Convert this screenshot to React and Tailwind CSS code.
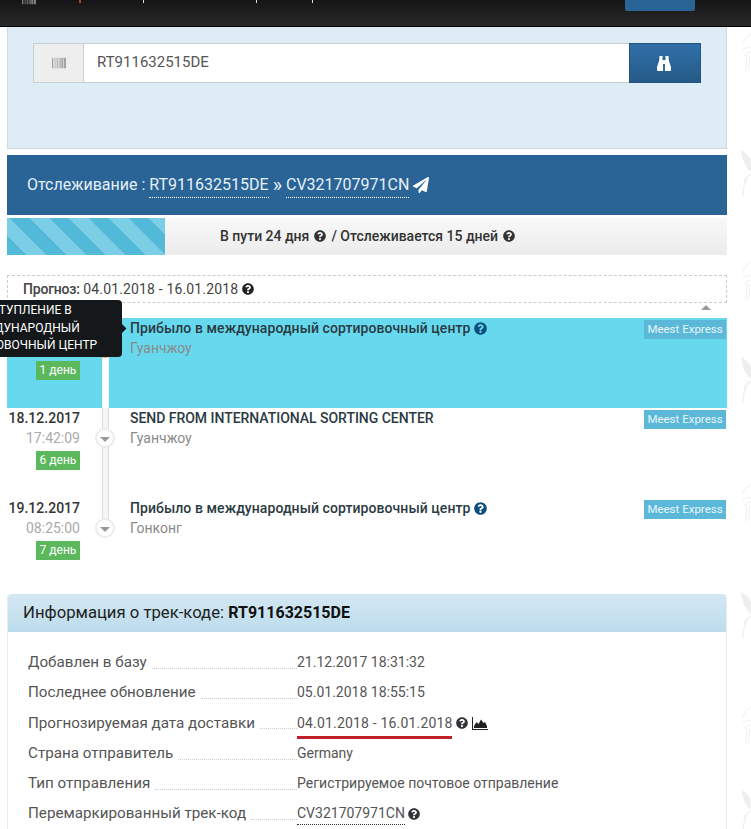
import React from "react";
import { FaBarcode, FaPaperPlane, FaQuestionCircle } from "react-icons/fa";

const events = [
  { days: "1 день", title: "Прибыло в международный сортировочный центр", place: "Гуанчжоу", help: true, active: true },
  { date: "18.12.2017", time: "17:42:09", days: "6 день", title: "SEND FROM INTERNATIONAL SORTING CENTER", place: "Гуанчжоу" },
  { date: "19.12.2017", time: "08:25:00", days: "7 день", title: "Прибыло в международный сортировочный центр", place: "Гонконг", help: true, last: true },
];

const info = [
  { label: "Добавлен в базу", value: "21.12.2017 18:31:32" },
  { label: "Последнее обновление", value: "05.01.2018 18:55:15" },
  { label: "Прогнозируемая дата доставки", value: "04.01.2018 - 16.01.2018", forecast: true },
  { label: "Страна отправитель", value: "Germany" },
  { label: "Тип отправления", value: "Регистрируемое почтовое отправление" },
  { label: "Перемаркированный трек-код", value: "CV321707971CN", code: true },
];

const Binoculars = () => (
  <svg className="mr-[3px] h-[15px] w-[14px]" viewBox="0 0 15 15" preserveAspectRatio="none" fill="#fff">
    <path d="M3 0h3v2h-.5L6.500 5v10H1c-.6 0-1-.4-1-1v-3L2.500 4V1c0-.5.1-1 .5-1z" />
    <path d="M12 0H9v2h.5L8.500 5v10H14c.6 0 1-.4 1-1v-3L12.500 4V1c0-.5-.1-1-.5-1z" />
    <path d="M6 4h3v4H6z" />
  </svg>
);

const AreaChart = () => (
  <svg className="ml-[1px] h-[13px] w-[16px]" viewBox="0 0 16 13" fill="#222">
    <path d="M0 0h1v12h15v1H0z" />
    <path d="M2 11V9l2.500-4 2 2L9 2.500l2.500 3.500 1.500-1 2 4v2z" />
  </svg>
);

// faint floral wallpaper at the right edge of the page
const Sprig = ({ className }) => (
  <svg className={className} viewBox="0 0 10 40" fill="none" stroke="#f0f0f0" strokeWidth="1">
    <path d="M10 2C6 4 3 8 2 12M1 18c3-2 6-3 9-2M3 24c2-3 4-4 7-4M5 40c0-8 1-14 1-18M8 38c0-6 0-10 1-14" />
  </svg>
);

const Leaf = ({ className }) => (
  <svg className={className} viewBox="0 0 10 46" fill="none">
    <path d="M0 0c4 2 8 6 10 10v12C5 18 1 10 0 0z" fill="#eeeeee" />
    <path d="M10 24c-3 2-6 4-7 8M2 46c0-6 1-12 4-18" stroke="#f0f0f0" strokeWidth="1.500" />
  </svg>
);

const Event = ({ event }) => (
  <div className={`flex h-[90px] ${event.active ? "bg-[#66d9ee]" : ""}`}>
    <div className="w-[73px] text-right">
      <div className="h-[40px]">
        {event.date && <div className="text-[14px] leading-[20px] font-medium text-[#333]">{event.date}</div>}
        {event.time && <div className="text-[14px] leading-[20px] text-[#aaa]">{event.time}</div>}
      </div>
      <div className="mt-[3px] ml-auto h-[19px] w-[44px] bg-[#5cb85c] text-center text-[12px] leading-[19px] text-white">
        {event.days}
      </div>
    </div>
    <div className={`relative w-[50px] ${event.last ? "h-[22px]" : ""}`}>
      <div
        className={`mx-auto h-full w-[7px] border-x ${
          event.active ? "border-[#f3f3f3] bg-white" : "border-[#dcdcdc] bg-[#f6f6f6]"
        }`}
      />
      <div
        className={`absolute left-[15px] top-[20px] flex h-[20px] w-[20px] items-center justify-center rounded-full border-2 bg-white ${
          event.active ? "border-[#f09a5a]" : "border-[#ececec]"
        }`}
      >
        <div className="mt-[2px] h-0 w-0 border-x-[5px] border-t-[5px] border-x-transparent border-t-[#999]" />
      </div>
    </div>
    <div className="flex-1">
      <div
        className={`flex items-center gap-[4px] text-[14px] leading-[20px] font-medium text-[#2b3a42] ${
          event.help ? "tracking-[0.07px]" : "tracking-[-0.03px]"
        }`}
      >
        {event.title}
        {event.help && <FaQuestionCircle className="text-[13px] text-[#0b4f7d]" />}
      </div>
      <div className="text-[14px] leading-[20px] text-[#8a8a8a]">{event.place}</div>
    </div>
    <div className="mr-[1px] mt-[2px] h-[19px] w-[82px] bg-[#5bb8d8] text-center text-[11.5px] leading-[19px] text-[#e8f6fb]">
      Meest Express
    </div>
  </div>
);

const InfoRow = ({ row }) => (
  <div className="flex h-[30.2px] items-center text-[#555]">
    <div className="flex w-[269px] items-end text-[15.2px]">
      <span>{row.label}</span>
      <span className="mb-[5px] ml-[5px] flex-1 border-b border-dotted border-[#ccc]" />
    </div>
    <div className="relative flex items-center gap-[3px] text-[14px]">
      <span
        className={`${row.code ? "border-b border-dotted border-[#333]" : ""} ${
          row.forecast ? "tracking-[0.18px]" : ""
        }`}
      >
        {row.value}
      </span>
      {row.forecast && (
        <>
          <FaQuestionCircle className="text-[12px] text-[#333]" />
          <AreaChart />
          <div className="absolute left-0 top-[23px] h-[3px] w-[155px] bg-[#c0202a]" />
        </>
      )}
      {row.code && <FaQuestionCircle className="text-[12px] text-[#333]" />}
    </div>
  </div>
);

export default function App() {
  return (
    <div className="relative h-[829px] overflow-hidden bg-white font-['Roboto',sans-serif]">
      {/* top bar, only the bottom of it is on screen */}
      <div className="flex h-[27px] items-start border-b border-black bg-[linear-gradient(#151515,#2a2a2a)]">
        <FaBarcode className="ml-[22px] -mt-[8px] text-[14px] text-[#aaa]" />
        <span className="ml-[43px] h-[3px] w-[2px] bg-[#c0392b]" />
        <span className="ml-[62px] h-[3px] w-[1px] bg-[#ddd]" />
        <span className="ml-[112px] h-[3px] w-[1px] bg-[#ddd]" />
        <span className="ml-[55px] h-[3px] w-[1px] bg-[#ddd]" />
        <div className="ml-[312px] h-[11px] w-[70px] rounded-b-[2px] bg-[#2a6496]" />
      </div>

      <div className="ml-[7px] w-[720px]">
        {/* search */}
        <div className="h-[122px] border-x border-b border-[#cfd8dd] bg-[#deecf5] pl-[25px] pt-[16px]">
          <div className="flex h-[40px] w-[668px]">
            <div className="flex w-[51px] items-center justify-center border border-[#c8d0d4] bg-[#eee]">
              <FaBarcode className="text-[14px] text-[#888]" />
            </div>
            <div className="flex-1 border-y border-[#c8d0d4] bg-white pl-[13px] text-[15px] leading-[36px] text-[#555]">
              RT911632515DE
            </div>
            <div className="flex w-[72px] items-center justify-center border border-[#245480] bg-[linear-gradient(#2f6fa8,#255a87)]">
              <Binoculars />
            </div>
          </div>
        </div>

        {/* tracking title */}
        <div className="mt-[6px] flex h-[60px] items-center gap-[4px] bg-[#2a6496] pl-[20px] text-[16px] text-[#e6f0f7]">
          <span>Отслеживание :</span>
          <span className="border-b border-dotted border-white">RT911632515DE</span>
          <span className="text-[20px] leading-[20px]">»</span>
          <span className="border-b border-dotted border-white">CV321707971CN</span>
          <FaPaperPlane className="text-[16px] text-white" />
        </div>

        {/* progress */}
        <div className="mt-[3px] flex h-[37px] bg-[linear-gradient(#f8f8f8,#ececec)]">
          <div className="w-[158px] bg-[repeating-linear-gradient(45deg,#52b9d9_0_14px,#7ccde6_14px_28px)]" />
          <div className="ml-[55px] -mt-[1px] flex items-center gap-[5px] text-[14px] font-medium text-[#333]">
            <span>В пути 24 дня</span>
            <FaQuestionCircle className="text-[12px]" />
            <span>/ Отслеживается 15 дней</span>
            <FaQuestionCircle className="text-[12px]" />
          </div>
        </div>

        {/* forecast */}
        <div className="mt-[20px] flex h-[28px] items-center gap-[4px] border border-dashed border-[#ccc] pl-[15px] text-[14px] text-[#444]">
          <span>
            <span className="font-medium tracking-[-0.2px]">Прогноз:</span>{" "}
            <span className="tracking-[0.15px]">04.01.2018 - 16.01.2018</span>
          </span>
          <FaQuestionCircle className="text-[12px] text-[#222]" />
        </div>
        <div className="flex h-[15px] justify-end pr-[16px] pt-[2px]">
          <div className="h-0 w-0 border-x-[5px] border-b-[5px] border-x-transparent border-b-[#999]" />
        </div>

        {events.map((event) => (
          <Event key={event.days} event={event} />
        ))}

        {/* track info */}
        <div className="mt-[6px] rounded-t-[4px] border-x border-[#e4edf2]">
          <div className="flex h-[38px] items-center rounded-t-[4px] bg-[linear-gradient(#d4e8f3,#bcdcec)] pl-[15px] text-[16.7px] text-[#222]">
            Информация о трек-коде:&nbsp;<b className="text-[16px] font-bold text-[#111]">RT911632515DE</b>
          </div>
          <div className="pl-[20px] pt-[15.6px]">
            {info.map((row) => (
              <InfoRow key={row.label} row={row} />
            ))}
          </div>
        </div>
      </div>

      {/* tooltip over the first event */}
      <div className="absolute left-[-76px] top-[300px] h-[57px] w-[198px] rounded-[4px] bg-[#15181b] pt-[2px] text-center text-[12px] leading-[17.500px] whitespace-nowrap text-white">
        ПОСТУПЛЕНИЕ В
        <br />
        МЕЖДУНАРОДНЫЙ
        <br />
        СОРТИРОВОЧНЫЙ ЦЕНТР
        <div className="absolute right-[-3px] top-[25px] h-[7px] w-[7px] rotate-45 bg-[#15181b]" />
      </div>

      <Sprig className="absolute left-[741px] top-[32px] h-[40px] w-[10px]" />
      <Leaf className="absolute left-[741px] top-[150px] h-[46px] w-[10px]" />
      <Sprig className="absolute left-[741px] top-[258px] h-[44px] w-[10px]" />
      <Leaf className="absolute left-[741px] top-[340px] h-[80px] w-[10px]" />
      <Sprig className="absolute left-[741px] top-[480px] h-[44px] w-[10px]" />
      <Leaf className="absolute left-[741px] top-[592px] h-[46px] w-[10px]" />
      <Sprig className="absolute left-[741px] top-[700px] h-[50px] w-[10px]" />
      <Leaf className="absolute left-[741px] top-[790px] h-[40px] w-[10px]" />
    </div>
  );
}
